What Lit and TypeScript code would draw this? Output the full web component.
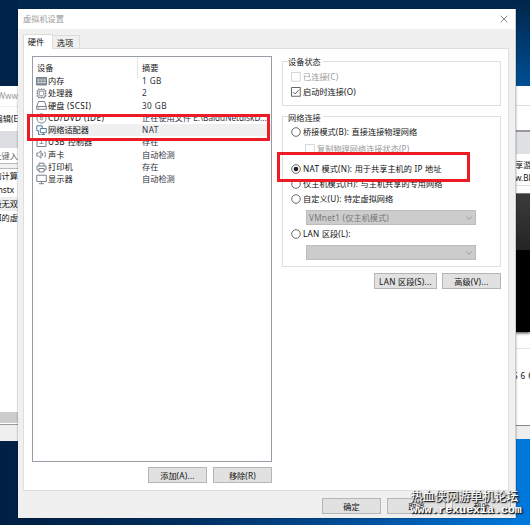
import { LitElement, html, css, svg } from "lit";
import { customElement } from "lit/decorators.js";
import { classMap } from "lit/directives/class-map.js";

const ICONS: Record<string, unknown> = {
  memory: svg`<path d="M.5 1.500h10v7.500h-10z" fill="#8a949c"/><path d="M1.500 4h2M4.500 4h2M7.500 4h2M1.500 6.500h2M4.500 6.500h2M7.500 6.500h2" stroke="#e8ecef"/>`,
  cpu: svg`<path d="M3 .5v10M5.500 .5v10M8 .5v10M.5 3h10M.5 5.500h10M.5 8h10"/><rect x="1.800" y="1.800" width="7.400" height="7.400" rx="1" fill="#fff"/><rect x="3.500" y="3.500" width="4" height="4" stroke-width=".6"/>`,
  disk: svg`<path d="M2.500 1.500h6l1.800 5v2.800H.7V6.500z M.7 6.500h9.600M2 8h1"/>`,
  cd: svg`<circle cx="5.500" cy="5.500" r="4.600"/><circle cx="5.500" cy="5.500" r="1.300"/><path d="M5.500 1v3M3 2.500l1.500 2"/>`,
  net: svg`<g stroke="#527d9c"><path d="M3 5.800H.8V.8h5.400V3"/><path d="M4.300 3.500h6v4.200h-6zM7.300 7.700v1.600M5.500 9.500h3.600"/><path d="M2.500 6v3.500h2"/></g>`,
  usb: svg`<path d="M1 1.500h9v8H1z"/><path d="M3.500 6.500h4M5.500 4v3" stroke-width=".8"/>`,
  sound: svg`<path d="M.8 4h1.700L5 1.800v7.400L2.500 7H.8zM6.700 4v3M8.500 2.700c1.300 1.600 1.300 4 0 5.600"/>`,
  printer: svg`<path d="M3 4V1.200h5V4M3 8H1V4h9v4H8M3 6.500h5v3.500H3z"/>`,
  display: svg`<path d="M.8 1.200h9.500v6.300H.8zM5.500 7.500v2M3 9.700h5"/>`,
};

const DEVICES = [
  ["memory", "内存", "1 GB"],
  ["cpu", "处理器", "2"],
  ["disk", "硬盘 (SCSI)", "30 GB"],
  ["cd", "CD/DVD (IDE)", "正在使用文件 E:\\BaiduNetdiskD..."],
  ["net", "网络适配器", "NAT"],
  ["usb", "USB 控制器", "存在"],
  ["sound", "声卡", "自动检测"],
  ["printer", "打印机", "存在"],
  ["display", "显示器", "自动检测"],
];

// Latin runs get their own tracking; Chinese runs keep the font's.
const mixed = (text: string) =>
  (text.match(/[\x00-\x7f]+|[^\x00-\x7f]+/g) ?? []).map((run) =>
    run.charCodeAt(0) < 128 ? html`<span class="lat">${run}</span>` : run);

@customElement("device-list")
class DeviceList extends LitElement {
  static styles = css`
    :host { display: block; box-sizing: border-box; width: 240px; height: 406px; border: 1px solid #979da5; background: #fff; overflow: hidden; }
    .row { display: grid; grid-template-columns: 105px 1fr; height: 12.3px; line-height: 12.3px; white-space: nowrap; }
    .head { height: 18px; line-height: 21px; color: #222; }
    .head span:first-child { padding-left: 4px; border-right: 1px solid #e5e5e5; }
    .head span:last-child { padding-left: 4px; }
    .name { display: flex; align-items: center; padding-left: 3px; }
    .label { white-space: pre; }
    .val { padding-left: 4px; color: #303040; }
    .lat { letter-spacing: .42px; }
    .long .val .lat { letter-spacing: 0; }
    .sel .label, .sel .val { background: #f0f0f0; }
    .sel .label { flex: 1; }
    svg { width: 11px; height: 11px; margin-right: 1px; flex: none; fill: none; stroke: #75828d; stroke-width: 1; }
  `;
  render() {
    return html`<div class="row head"><span>设备</span><span>摘要</span></div>
      ${DEVICES.map(([icon, name, val]) => html`<div class=${classMap({ row: true, sel: icon === "net", long: icon === "cd" })}>
        <div class="name"><svg viewBox="0 0 11 11">${ICONS[icon]}</svg><span class="label">${mixed(name)}</span></div>
        <div class="val">${mixed(val)}</div>
      </div>`)}`;
  }
}

@customElement("app-root")
class AppRoot extends LitElement {
  static styles = css`
    :host { display: block; position: relative; width: 530px; height: 525px; overflow: hidden;
      font: 8.2px/10px "Noto Sans", "Noto Sans CJK SC", sans-serif; color: #111; white-space: nowrap;
      background: linear-gradient(90deg, #001f43 0, #002e5e 35%, #0052a0 70%, #0078db 98%); }
    .sky { position: absolute; inset: 0 0 auto 0; height: 90px; background: linear-gradient(180deg, #00264a 0, #00305d 25%, #004f94 95%); }
    .skyleft { position: absolute; left: 0; top: 0; width: 18px; height: 90px; background: #002349; }
    .win { position: absolute; background: #fff; overflow: hidden; display: flex; flex-direction: column; }
    .win div { flex: none; box-sizing: border-box; }
    .back-left { left: 0; top: 86px; width: 18px; height: 355px; align-items: stretch; }
    .back-left .r { display: flex; justify-content: flex-end; align-items: center; }
    .lt { height: 20px; color: #999; }
    .lm { height: 25px; border-top: 1px solid #eee; }
    .lg { height: 17px; background: #dcdee1; }
    .ls { height: 15px; color: #666; }
    .lp { height: 6px; background: #f2f2f2; border: 1px solid #bbb; border-width: 1px 0; }
    .li { height: 14px; }
    .pad { padding-right: 4px; }
    .lh { background: #eee; }
    .lscroll { margin-top: 187px; height: 11px; background: #cdcdcd; }
    .lfoot { margin-top: 1px; height: 17px; background: #f0f0f0; border-top: 1px solid #999; }
    .back-right { left: 515px; top: 86px; width: 15px; height: 353px; }
    .r1 { height: 20px; border-bottom: 1px solid #ddd; }
    .r2 { height: 26px; border-bottom: 2px solid #999; }
    .r3 { height: 22px; background: #dfe1e4; }
    .r4 { height: 32px; padding-top: 4px; line-height: 13px; border-bottom: 1px solid #ddd; }
    .r5 { margin-top: 7px; height: 57px; background: linear-gradient(#3b3b3b, #242424); border-top: 1px solid #777; }
    .r6 { height: 82px; background: #000; box-shadow: 0 1px 3px #333; }
    .r7 { height: 17px; border-bottom: 1px solid #e5e5e5; }
    .r8 { height: 77px; padding-top: 22px; border-bottom: 1px solid #888; letter-spacing: .4px; text-indent: -2px; }
    .r9 { height: 13px; background: #eee; }
    .dialog { left: 18px; top: 9px; width: 498px; height: 509px; background: #f0f0f0; box-sizing: border-box; border-right: 1px solid #ccc; box-shadow: 0 0 2px #0006; }
    .title { height: 20px; background: #fff; color: #999; display: flex; align-items: center; justify-content: space-between; padding: 0 7px 0 5px; }
    .title svg { width: 8px; height: 8px; stroke: #888; }
    .tabs { height: 19px; padding: 5px 0 0 5px; display: flex; align-items: flex-end; }
    .tab { width: 27px; height: 13px; border: 1px solid #dcdcdc; border-width: 1px 1px 0 0; padding-right: 2px; text-align: center; line-height: 14px; }
    .tab.on { width: 30px; height: 15px; border-left-width: 1px; background: #fff; margin-bottom: -1px; padding-right: 4px; line-height: 14px; z-index: 1; }
    .panel { margin: 0 6px 0 5px; height: 443px; background: #fff; border: 1px solid #dedede; padding: 7px 0 0 8px; display: flex; gap: 10px; }
    .left .btns { margin-top: 5px; }
    .side { width: 219px; padding-top: 5px; }
    .group { border: 1px solid #dfdfdf; padding-left: 5px; }
    .g1 { height: 45px; }
    .g2 { height: 151px; margin-top: 10px; }
    .label { width: max-content; background: #fff; padding-right: 2px; height: 10px; margin-top: -5px; color: #222; }
    .g2 .label { margin-top: -4px; }
    .opt { height: 10px; display: flex; align-items: center; gap: 2px; padding-left: 3px; }
    .opt svg { width: 10px; height: 10px; flex: none; fill: #fff; stroke: #444; stroke-width: .8; }
    .lat { letter-spacing: .25px; }
    .off { color: #999; } .off svg { stroke: #ccc; }
    .m4 { margin-top: 4px; } .m5 { margin-top: 5px; } .m7 { margin-top: 7px; } .m10 { margin-top: 10px; }
    .sub { padding-left: 17px; }
    .combo { margin: 6px 0 0 18px; width: 170px; height: 15px; background: #ccc; border: 1px solid #bdbdbd; color: #777; display: flex; align-items: center; justify-content: space-between; padding: 0 3px 0 2px; }
    .combo svg { width: 6px; height: 4px; fill: none; stroke: #999; }
    .btns { display: flex; justify-content: flex-end; gap: 6px; }
    .side .btns { margin-top: 6px; gap: 5px; }
    .btn { width: 59px; height: 16px; background: #e1e1e1; border: 1px solid #b5b5b5; text-align: center; line-height: 15px; }
    .wide { width: 63px; }
    .foot { margin: 7px 4px 0 0; }
    .mark { position: absolute; border: 3.500px solid #ed1c24; box-sizing: border-box; }
    .mark1 { left: 27px; top: 113.500px; width: 243px; height: 27.500px; }
    .mark2 { left: 277px; top: 151.500px; width: 193px; height: 30.500px; }
    .water { position: absolute; left: 410.500px; top: 489px; color: #fff; text-shadow: 1px 1px 0 #222, 1px 1px 2px #000; }
    .water div:first-child { font-size: 12px; line-height: 15px; }
    .water div:last-child { font: bold 11.600px/11px "Liberation Mono", monospace; }
  `;
  mark(kind: string, on = false) {
    return html`<svg viewBox="0 0 10 10">${kind === "radio"
      ? svg`<circle cx="5" cy="5" r="4.300"/>${on ? svg`<circle cx="5" cy="5" r="2.300" fill="#222" stroke="none"/>` : ""}`
      : svg`<rect x=".6" y=".6" width="8.600" height="8.600"/>${on ? svg`<path d="M2.200 5l2 2 3.800-4.300" fill="none"/>` : ""}`}</svg>`;
  }
  opt(cls: string, kind: string, text: string, on = false) {
    return html`<div class="opt ${cls}">${this.mark(kind, on)}<span>${mixed(text)}</span></div>`;
  }
  combo(text: string) {
    return html`<div class="combo"><span>${mixed(text)}</span><svg viewBox="0 0 6 4"><path d="M.4.5L3 3.300 5.600.5"/></svg></div>`;
  }
  render() {
    return html`
      <div class="sky"></div><div class="skyleft"></div>
      <div class="win back-left">
        <div class="r lt">Www</div><div class="r lm">编辑(E</div><div class="lg"></div>
        <div class="r ls">上键入</div><div class="lp"></div>
        <div class="r li">的计算</div><div class="r li pad">nstx</div><div class="r li lh">极无双</div><div class="r li">I的虚</div>
        <div class="lscroll"></div><div class="lfoot"></div>
      </div>
      <div class="win back-right">
        <div class="r1"></div><div class="r2"></div><div class="r3"></div>
        <div class="r4">享游<br>w.BL</div><div class="r5"></div><div class="r6"></div>
        <div class="r7"></div><div class="r8">5 6 6</div><div class="r9"></div>
      </div>
      <div class="win dialog">
        <div class="title"><span>虚拟机设置</span><svg viewBox="0 0 8 8"><path d="M.7.7l6.600 6.600M7.300.7L.7 7.300"/></svg></div>
        <div class="tabs"><div class="tab on">硬件</div><div class="tab">选项</div></div>
        <div class="panel">
          <div class="left">
            <device-list></device-list>
            <div class="btns"><div class="btn">${mixed("添加(A)...")}</div><div class="btn">${mixed("移除(R)")}</div></div>
          </div>
          <div class="side">
            <div class="group g1">
              <div class="label">设备状态</div>
              ${this.opt("off m5", "check", "已连接(C)")}
              ${this.opt("m5", "check", "启动时连接(O)", true)}
            </div>
            <div class="group g2">
              <div class="label">网络连接</div>
              ${this.opt("m4", "radio", "桥接模式(B): 直接连接物理网络")}
              ${this.opt("off sub m7", "check", "复制物理网络连接状态(P)")}
              ${this.opt("m10", "radio", "NAT 模式(N): 用于共享主机的 IP 地址", true)}
              ${this.opt("m5", "radio", "仅主机模式(H): 与主机共享的专用网络")}
              ${this.opt("m5", "radio", "自定义(U): 特定虚拟网络")}
              ${this.combo("VMnet1 (仅主机模式)")}
              ${this.opt("m4", "radio", "LAN 区段(L):")}
              ${this.combo("")}
            </div>
            <div class="btns"><div class="btn wide">${mixed("LAN 区段(S)...")}</div><div class="btn">${mixed("高级(V)...")}</div></div>
          </div>
        </div>
        <div class="btns foot"><div class="btn">确定</div><div class="btn">取消</div><div class="btn">帮助</div></div>
      </div>
      <div class="mark mark1"></div><div class="mark mark2"></div>
      <div class="water"><div>热血侠网游单机论坛</div><div>www.rexuexia.com</div></div>`;
  }
}
